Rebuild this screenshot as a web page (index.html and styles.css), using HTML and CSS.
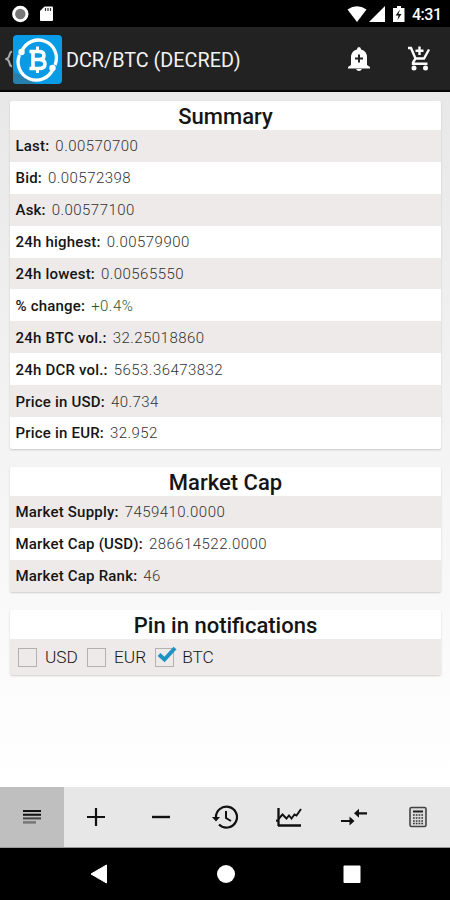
FILE: index.html
```
<!DOCTYPE html>
<html lang="en">
<head>
  <meta charset="UTF-8" />
  <title>DCR/BTC (DECRED)</title>
  <link rel="stylesheet" href="styles.css">
</head>
<body>
  <div class="status-bar">
    <svg class="status-left" width="42" height="18" viewBox="0 0 42 18">
      <circle cx="8.3" cy="9" r="6.7" fill="#777" stroke="#fff" stroke-width="3" />
      <path d="M32.5 1.5H40q1 0 1 1V15q0 1-1 1H29q-1 0-1-1V6z" fill="#fff" />
      <path d="M33.5 3v3M36 3v3M38.5 3v3" stroke="#333" stroke-width="1.2" />
    </svg>
    <svg class="status-right" width="60" height="18" viewBox="0 0 60 18">
      <path d="M0.500 4.500Q10-2 19.500 4.500L10 17z" fill="#fff" />
      <path d="M38 1v16H22z" fill="#fff" />
      <path d="M50 1h4v2h3.500v14H46V3h4z" fill="#fff" />
      <path d="M53 4.500l-4.500 6h3l-1 4.500 4-6h-3z" fill="#111" />
    </svg>
    <span class="clock">4:31</span>
  </div>

  <div class="header">
    <svg class="back" width="8" height="18" viewBox="0 0 8 18">
      <path d="M7 1.500Q5 2 4.500 5 4 8 1.500 9 4 10 4.500 13 5 16 7 16.500" fill="none" stroke="#aaa" stroke-width="2" />
    </svg>
    <svg class="logo" width="49" height="49" viewBox="0 0 49 49">
      <rect width="49" height="49" rx="4" fill="#0a9be6" />
      <path d="M2 38L17 43 22 49H4q-4 0-4-4V34z" fill="#267fad" />
      <g fill="none" stroke="#fff" stroke-width="3.300">
        <path d="M9 16A17.500 17.500 0 0 1 42 30" />
        <path d="M40 34A17.500 17.500 0 0 1 6.500 20" />
      </g>
      <circle cx="8.500" cy="17" r="3.200" fill="#fff" />
      <circle cx="39.500" cy="33" r="3.200" fill="#fff" />
      <g fill="none" stroke="#fff" stroke-width="3.600">
        <path d="M16.500 16.500H26q5 0 5 4t-5 4h-5M26 24.500q6 0 6 4.500t-6 4.500h-9.500M20 16v18" />
        <path d="M24.500 11.500v5M24.500 34v4" stroke-width="3" />
      </g>
    </svg>
    <h1>DCR/BTC (DECRED)</h1>
    <svg class="bell" width="22" height="24" viewBox="0 0 22 24">
      <path d="M11 0q2 0 2 2.500 6 1.500 6 8V18l3 2v1.500H0V20l3-2v-7.500q0-6.500 6-8Q9 0 11 0zM8 22h6q-1 2-3 2t-3-2z" fill="#fff" />
      <path d="M11 7.500v8M7 11.500h8" stroke="#222" stroke-width="2" />
    </svg>
    <svg class="cart" width="24" height="25" viewBox="0 0 24 25">
      <g fill="none" stroke="#fff" stroke-width="2.400">
        <path d="M1 2h3L8.500 12.500h8.500l5-9M8.500 12.500L6 16.500v1.200h14.500M12.500 0.500v8.500M8.500 4.700h8" />
      </g>
      <circle cx="7" cy="22" r="2.500" fill="#fff" />
      <circle cx="18.500" cy="22" r="2.500" fill="#fff" />
    </svg>
  </div>

  <div class="content">
    <div class="card">
      <h2>Summary</h2>
      <div class="row"><b>Last:</b><span>0.00570700</span></div>
      <div class="row"><b>Bid:</b><span>0.00572398</span></div>
      <div class="row"><b>Ask:</b><span>0.00577100</span></div>
      <div class="row"><b>24h highest:</b><span>0.00579900</span></div>
      <div class="row"><b>24h lowest:</b><span>0.00565550</span></div>
      <div class="row"><b>% change:</b><span class="up">+0.4%</span></div>
      <div class="row"><b>24h BTC vol.:</b><span>32.25018860</span></div>
      <div class="row"><b>24h DCR vol.:</b><span>5653.36473832</span></div>
      <div class="row"><b>Price in USD:</b><span>40.734</span></div>
      <div class="row"><b>Price in EUR:</b><span>32.952</span></div>
    </div>

    <div class="card">
      <h2>Market Cap</h2>
      <div class="row"><b>Market Supply:</b><span>7459410.0000</span></div>
      <div class="row"><b>Market Cap (USD):</b><span>286614522.0000</span></div>
      <div class="row"><b>Market Cap Rank:</b><span>46</span></div>
    </div>

    <div class="card">
      <h2>Pin in notifications</h2>
      <div class="row pins">
        <div class="pin"><i class="box"></i>USD</div>
        <div class="pin"><i class="box"></i>EUR</div>
        <div class="pin"><i class="box"><svg class="check" width="20" height="17" viewBox="0 0 20 17"><path d="M2 8.500l5.500 5L18 2" fill="none" stroke="#1d93c4" stroke-width="4" /></svg></i>BTC</div>
      </div>
    </div>
  </div>

  <div class="toolbar">
    <div class="tool active">
      <svg width="26" height="26" viewBox="0 0 26 26">
        <path d="M4 7h18M4 10.700h18" stroke="#111" stroke-width="2" />
        <path d="M4 14.400h18" stroke="#444" stroke-width="2" />
        <path d="M4 18.400h13" stroke="#777" stroke-width="2.500" />
      </svg>
    </div>
    <div class="tool">
      <svg width="26" height="26" viewBox="0 0 26 26"><path d="M13 4v18M4 13h18" stroke="#111" stroke-width="2.200" /></svg>
    </div>
    <div class="tool">
      <svg width="26" height="26" viewBox="0 0 26 26"><path d="M4 13h18" stroke="#111" stroke-width="2.400" /></svg>
    </div>
    <div class="tool">
      <svg width="26" height="26" viewBox="0 0 26 26">
        <path d="M4 14A10.500 10.500 0 1 1 7 20.500" fill="none" stroke="#111" stroke-width="2.200" />
        <path d="M0 13h8l-4 4.500z" fill="#111" />
        <path d="M14 7v7l5 3" fill="none" stroke="#111" stroke-width="2" />
      </svg>
    </div>
    <div class="tool">
      <svg width="26" height="26" viewBox="0 0 26 26">
        <path d="M2.500 4v12L0 17M2 21.500h23M2.500 17v5" fill="none" stroke="#111" stroke-width="2.300" />
        <path d="M2.500 15l4-4.500 4 4 2.500-3 2.500 3 3-4 2 1 4.500-6.500" fill="none" stroke="#111" stroke-width="1.900" />
      </svg>
    </div>
    <div class="tool">
      <svg width="26" height="26" viewBox="0 0 26 26">
        <path d="M0 17h9M26 9.300h-9" stroke="#111" stroke-width="2.200" />
        <path d="M8.500 12.500l5 4.500-5 4.500zM18 4.800v9l-5-4.500z" fill="#111" />
      </svg>
    </div>
    <div class="tool">
      <svg width="26" height="26" viewBox="0 0 26 26">
        <rect x="5" y="3.500" width="16" height="19" rx="1.500" fill="#ddd" stroke="#444" stroke-width="1.600" />
        <path d="M8 7.500h10" stroke="#222" stroke-width="2" />
        <path d="M8 11h10M8 14h10M8 17h10M8 19.500h10" stroke="#333" stroke-width="1.600" stroke-dasharray="1.700 1.070" />
      </svg>
    </div>
  </div>

  <div class="nav-bar">
    <svg width="18" height="20" viewBox="0 0 18 20"><path d="M16.500 1v18L1 10z" fill="#fff" stroke="#fff" stroke-linejoin="round" /></svg>
    <svg width="18" height="20" viewBox="0 0 18 20"><circle cx="9" cy="10" r="9" fill="#fff" /></svg>
    <svg width="18" height="20" viewBox="0 0 18 20"><rect x="0.500" y="1.500" width="17" height="17.500" rx="1" fill="#fff" /></svg>
  </div>
</body>
</html>
```
FILE: styles.css
```
body {
  margin: 0;
  width: 450px;
  height: 900px;
  display: flex;
  flex-direction: column;
  font-family: Roboto, sans-serif;
  color: #151515;
  overflow: hidden;
}

svg {
  display: block;
  flex-shrink: 0;
}

.status-bar {
  height: 27px;
  box-sizing: border-box;
  padding: 0 9px 0 12px;
  background: #000;
  display: flex;
  align-items: center;
}

.status-left {
  margin-top: 1px;
}

.status-right {
  margin-left: auto;
  margin-right: 5px;
}

.clock {
  width: 29px;
  margin-top: 1px;
  color: #fff;
  font-size: 16px;
  font-weight: 500;
  letter-spacing: -0.5px;
}

.header {
  height: 65px;
  box-sizing: border-box;
  padding: 0 19px 0 5px;
  background: #222;
  border-bottom: 2px solid #050505;
  display: flex;
  align-items: center;
}

.logo {
  margin-top: 2px;
}

.header h1 {
  margin: 3px 0 0 4px;
  color: #f2f2f2;
  font-size: 19.8px;
  font-weight: 400;
  white-space: nowrap;
}

.bell {
  margin-left: auto;
  margin-right: 37px;
}

.content {
  flex: 1;
  display: flex;
  flex-direction: column;
  gap: 18px;
  padding: 9px 9px 0 10px;
  background: linear-gradient(#e8e8e8, #fff);
}

.card {
  background: #fff;
  border-radius: 2px;
  box-shadow: 0 1px 2px rgba(0, 0, 0, 0.18);
}

.card h2 {
  margin: 0;
  height: 29px;
  line-height: 31px;
  text-align: center;
  font-size: 22px;
  font-weight: 500;
}

.row {
  height: 31.9px;
  box-sizing: border-box;
  padding: 1px 0 0 5.5px;
  display: flex;
  align-items: center;
  gap: 6px;
  font-size: 15px;
}

.row:nth-child(even) {
  background: #eeeae9;
}

.row b {
  font-weight: 500;
  letter-spacing: 0.2px;
}

.row span {
  font-weight: 300;
  letter-spacing: 0.45px;
  color: #333;
}

.row .up {
  color: #1f5a2a;
}

.pins {
  height: 36px;
  padding-left: 8px;
  gap: 9px;
  font-size: 17.3px;
  font-weight: 300;
}

.pin {
  display: flex;
  align-items: center;
  gap: 8px;
}

.box {
  position: relative;
  width: 19px;
  height: 19px;
  box-sizing: border-box;
  border: 1.5px solid #b3b0af;
}

.check {
  position: absolute;
  left: 1px;
  top: -3px;
}

.toolbar {
  height: 61px;
  box-sizing: border-box;
  display: flex;
  background: #e7e7e7;
  border-bottom: 1px solid #999;
}

.tool {
  flex: 1;
  display: flex;
  align-items: center;
  justify-content: center;
}

.tool.active {
  background: #bfbfbf;
}

.nav-bar {
  height: 52px;
  box-sizing: border-box;
  padding: 0 89px 0 90px;
  background: #000;
  display: flex;
  align-items: center;
  justify-content: space-between;
}
```
